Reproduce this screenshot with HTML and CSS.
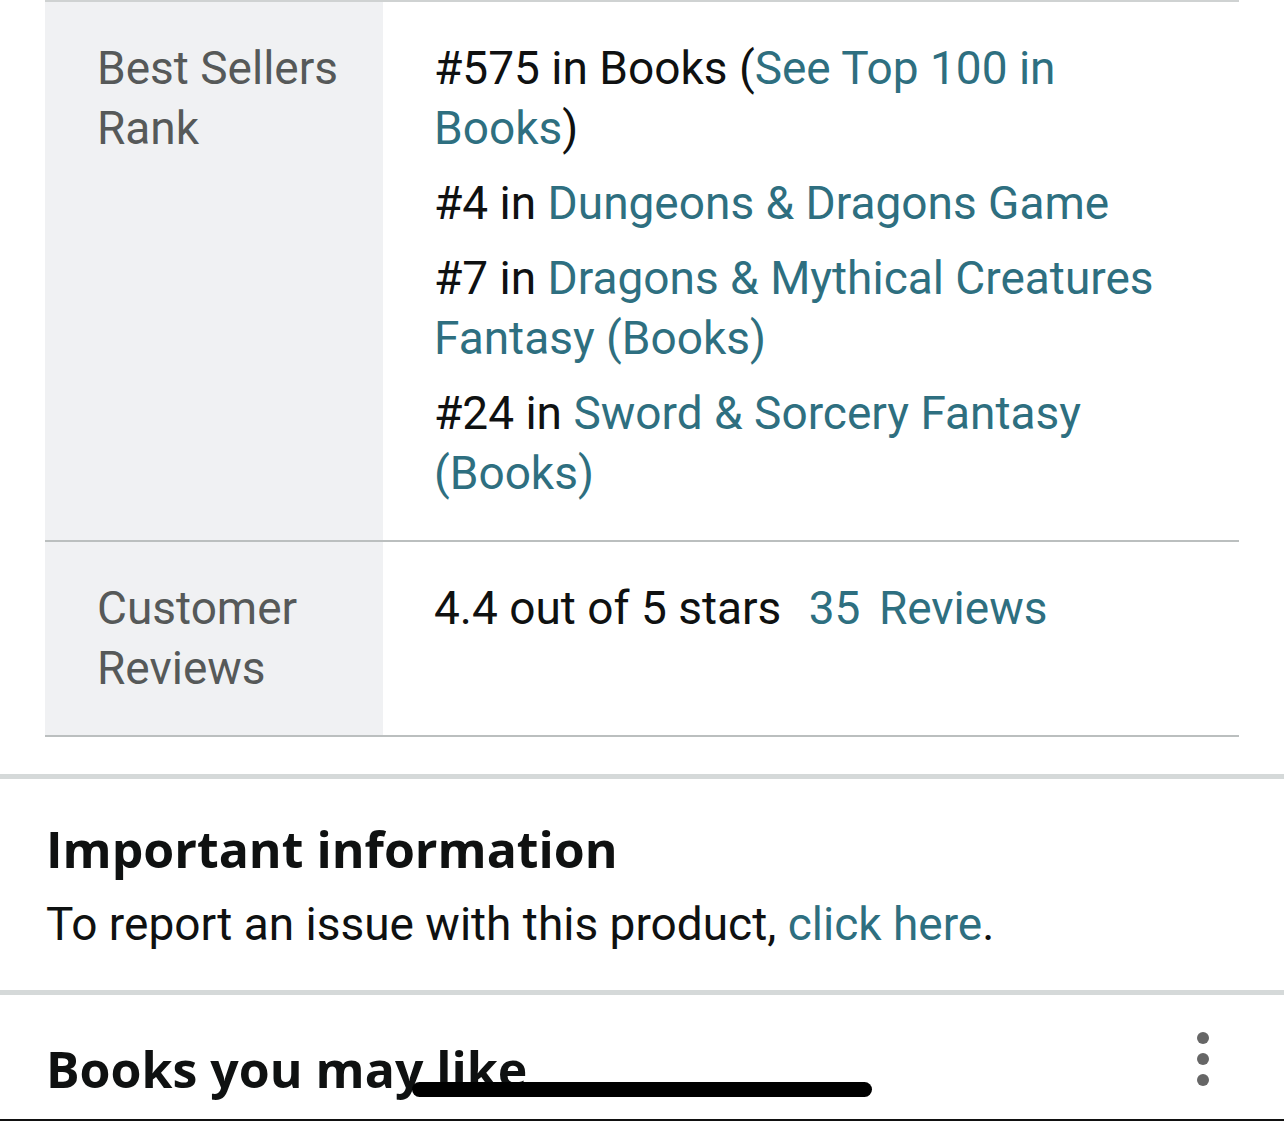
FILE: index.html
```html
<!DOCTYPE html>
<html lang="en">
<head>
    <meta charset="UTF-8">
    <meta name="viewport" content="width=device-width, initial-scale=1.0">
    <title>Product Details</title>
    <link rel="stylesheet" href="styles.css">
</head>
<body>

<div class="details">
    <table class="details-table">
        <tr>
            <th>Best Sellers Rank</th>
            <td>
                <div class="rank">#575 in Books (<a href="#">See Top 100 in Books</a>)</div>
                <div class="rank">#4 in <a href="#">Dungeons &amp; Dragons Game</a></div>
                <div class="rank">#7 in <a href="#">Dragons &amp; Mythical Creatures Fantasy (Books)</a></div>
                <div class="rank">#24 in <a href="#">Sword &amp; Sorcery Fantasy (Books)</a></div>
            </td>
        </tr>
        <tr>
            <th>Customer Reviews</th>
            <td>4.4 out of 5 stars <a class="reviews-link" href="#"><span class="count">35</span> Reviews</a></td>
        </tr>
    </table>
</div>

<div class="section">
    <h2>Important information</h2>
    <p>To report an issue with this product, <a href="#">click here</a>.</p>
</div>

<div class="section books">
    <h2>Books you may like</h2>
    <svg class="more" width="14" height="56" viewBox="0 0 14 56">
        <circle cx="7" cy="7" r="6" fill="#666"/>
        <circle cx="7" cy="28" r="6" fill="#666"/>
        <circle cx="7" cy="49" r="6" fill="#666"/>
    </svg>
</div>

<div class="home-indicator"></div>

</body>
</html>
```

FILE: styles.css
```css
body {
    font-family: Roboto, "Liberation Sans", sans-serif;
    background: #fff;
    color: #0f1111;
    margin: 0;
    height: 1121px;
    overflow: hidden;
    position: relative;
    border-bottom: 2px solid #111;
    box-sizing: border-box;
}
a {
    color: #2e6f80;
    text-decoration: none;
}
.details {
    padding: 0 45px 37px;
    border-bottom: 5px solid #d5d9d9;
}
.details-table {
    width: 100%;
    border-collapse: collapse;
    border-top: 2px solid #cfd2d2;
    font-size: 46px;
    line-height: 60px;
}
.details-table tr {
    border-bottom: 2px solid #bbbfbf;
}
.details-table th {
    width: 286px;
    background: #f0f1f3;
    color: #565959;
    font-weight: normal;
    text-align: left;
    vertical-align: top;
    padding: 36px 0 37px 52px;
}
.details-table td {
    vertical-align: top;
    padding: 36px 50px 37px 51px;
}
.rank + .rank {
    margin-top: 15px;
}
.reviews-link {
    margin-left: 16px;
}
.count {
    margin-right: 7px;
}
.section {
    padding: 40px 45px 38px 46px;
    border-bottom: 5px solid #d5d9d9;
}
.section h2 {
    margin: 0;
    font-family: "Open Sans", Roboto, sans-serif;
    font-size: 50px;
    line-height: 60px;
    font-weight: bold;
}
.section p {
    margin: 17px 0 0;
    font-size: 46px;
    line-height: 56px;
}
.books {
    border-bottom: none;
    display: flex;
    justify-content: space-between;
    align-items: flex-start;
    padding-top: 36px;
    padding-right: 74px;
}
.books h2 {
    margin-top: 8px;
}
.home-indicator {
    position: absolute;
    left: 412px;
    top: 1082px;
    width: 460px;
    height: 15px;
    border-radius: 8px;
    background: #000;
}
```
